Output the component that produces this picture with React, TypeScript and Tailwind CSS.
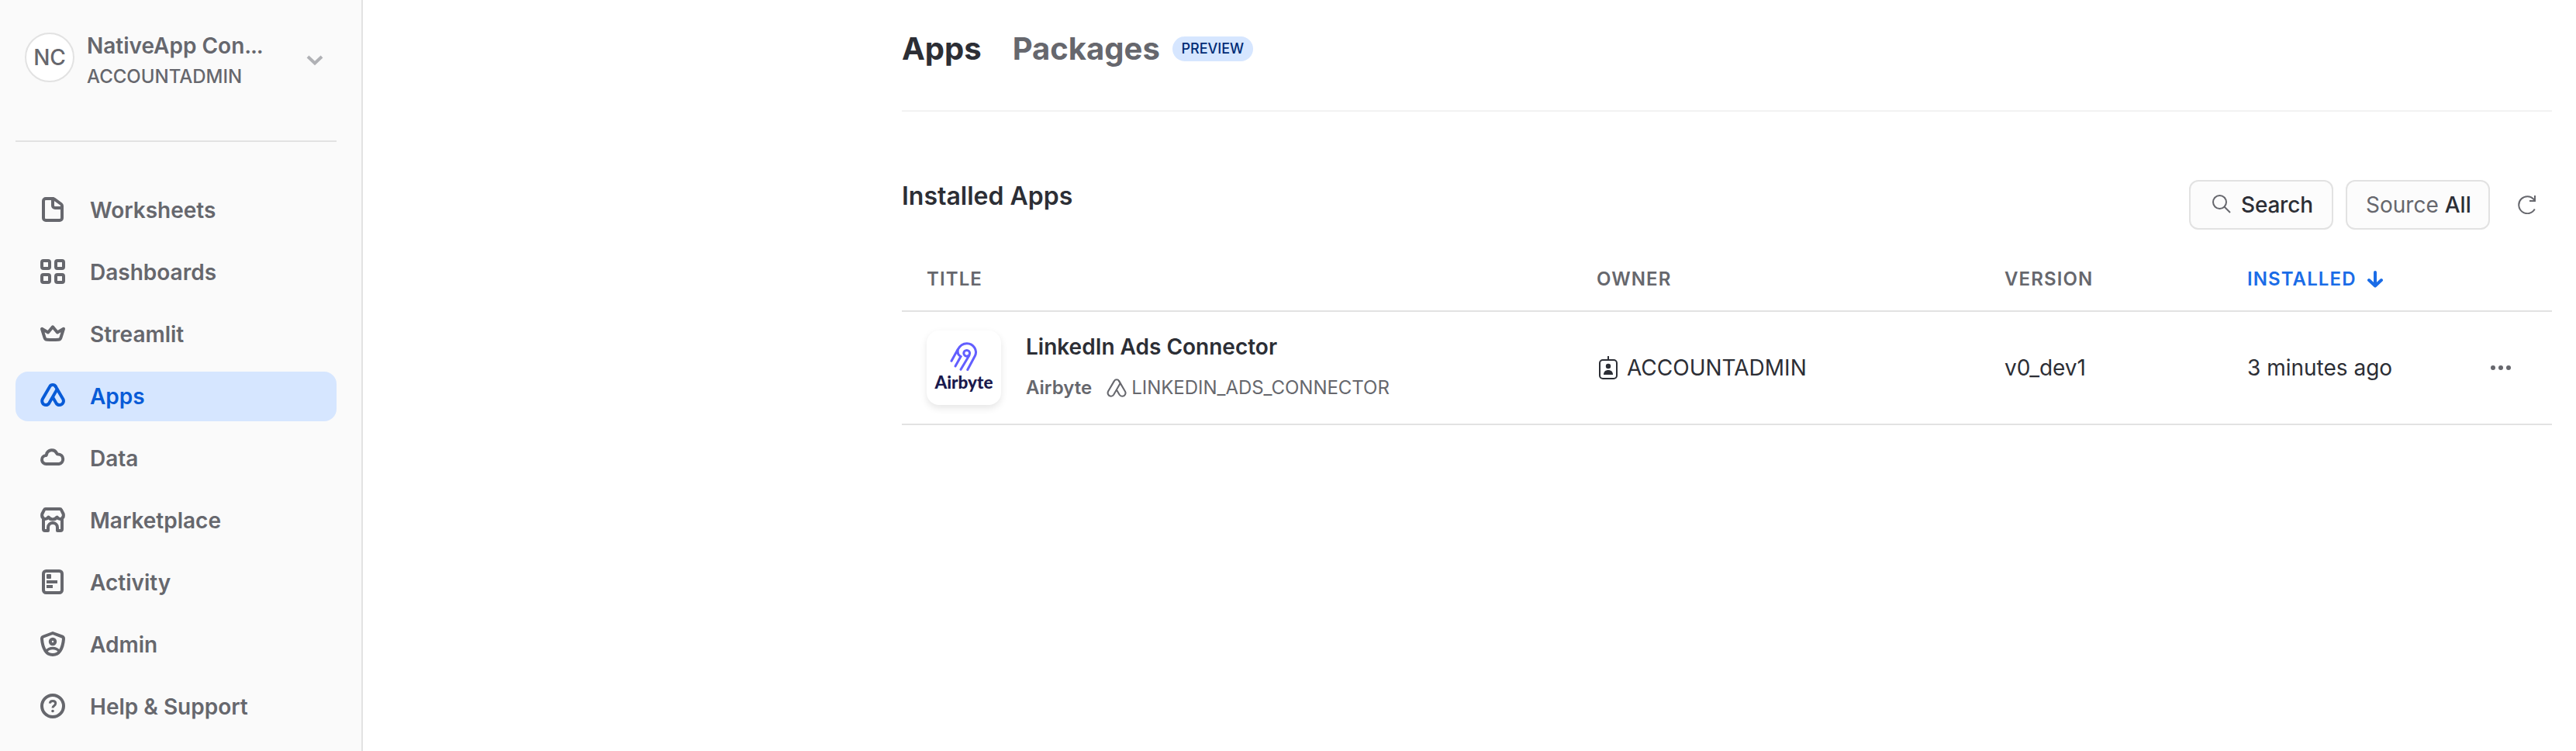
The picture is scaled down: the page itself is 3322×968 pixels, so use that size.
import React from "react";

type IconProps = { children: React.ReactNode };

function NavIcon({ children }: IconProps) {
  return (
    <svg
      className="-mt-0.5 size-8 shrink-0 overflow-visible"
      viewBox="0 0 32 32"
      fill="none"
      stroke="currentColor"
      strokeWidth={4}
      strokeLinecap="round"
      strokeLinejoin="round"
    >
      {children}
    </svg>
  );
}

const appsPath = (
  <>
    <path d="M19.8 4.3C18.2 1.3 13.8 1.3 12.2 4.3L2.9 20.2C1.2 23.4 3 28 7.2 28c1.9 0 3.2-.8 4.2-2.4L21.5 8" />
    <path d="M19.8 4.3l9.4 16C31.2 24 28.6 28 24.6 28c-1.9 0-3.2-.8-4.2-2.4L16.3 18.5" />
  </>
);

const navItems = [
  {
    label: "Worksheets",
    icon: (
      <>
        <path d="M16 2H7a3 3 0 0 0-3 3v22a3 3 0 0 0 3 3h18a3 3 0 0 0 3-3V11.3a3 3 0 0 0-1.2-2.3L18 2.7A3 3 0 0 0 16 2z" />
        <path d="M16 2v9a3 3 0 0 0 3 3h9" />
      </>
    ),
  },
  {
    label: "Dashboards",
    icon: (
      <>
        <rect x="2" y="2" width="10" height="10" rx="2" />
        <rect x="20" y="2" width="10" height="10" rx="2" />
        <rect x="2" y="20" width="10" height="10" rx="2" />
        <rect x="20" y="20" width="10" height="10" rx="2" />
      </>
    ),
  },
  {
    label: "Streamlit",
    icon: <path d="M2 9.8l8 4.7L16 7.3l6 7.2 8-4.7-3.6 11.5a3.500 3.500 0 0 1-3 2.4c-4.8.4-10 .4-14.800 0a3.500 3.500 0 0 1-3-2.400z" />,
  },
  { label: "Apps", icon: appsPath, active: true },
  {
    label: "Data",
    icon: <path d="M7.500 24a5.500 5.500 0 0 1-1-10.900c.9 0 1.300-.2 1.500-1.300a7 7 0 0 1 13.200-1.500c.4.900.9 1.100 2 1.200A6.300 6.300 0 0 1 24 24z" />,
  },
  {
    label: "Marketplace",
    icon: (
      <>
        <path d="M4.500 14.500C2.300 13 1.600 11 2.300 8.500L5 3.200A2 2 0 0 1 6.800 2h18.400A2 2 0 0 1 27 3.200l2.700 5.300c.7 2.500 0 4.500-2.200 6-2.300 1-4.300.3-6-2-1.600 2.300-3.300 3-5.500 3s-3.900-.7-5.500-3c-1.700 2.300-3.700 3-6 2z" />
        <path d="M4 15v13a2 2 0 0 0 2 2h4v-4a6 6 0 0 1 12 0v4h4a2 2 0 0 0 2-2V15" />
      </>
    ),
  },
  {
    label: "Activity",
    icon: (
      <>
        <rect x="4" y="2" width="24" height="28" rx="3.5" />
        <g fill="currentColor" stroke="none">
          <rect x="8" y="6" width="6" height="6" rx="1" />
          <rect x="8" y="14" width="14" height="4" />
          <rect x="8" y="20" width="8" height="4" />
        </g>
      </>
    ),
  },
  {
    label: "Admin",
    icon: (
      <>
        <path d="M16 2L4 6.500a3 3 0 0 0-2 3c.4 6 1.700 11 4.500 15.500C8.800 28.500 12 30 16 30s7.200-1.500 9.500-5c2.800-4.500 4.100-9.500 4.500-15.500a3 3 0 0 0-2-3z" />
        <circle cx="16" cy="13" r="3.2" />
        <path d="M7.500 25.500c2-2.500 5-4 8.500-4s6.500 1.500 8.500 4" strokeWidth={3.6} />
      </>
    ),
  },
  {
    label: "Help & Support",
    icon: (
      <>
        <circle cx="16" cy="16" r="14" />
        <path
          d="M12.300 12.600c.3-2 1.800-3 3.700-3 2.200 0 3.700 1.100 3.700 3 0 1.600-.9 2.300-2 3.100-1.200.8-1.700 1.400-1.700 2.800"
          strokeWidth={3}
          strokeLinecap="butt"
        />
        <circle cx="16" cy="22.5" r="1.8" fill="currentColor" stroke="none" />
      </>
    ),
  },
];

function Sidebar() {
  return (
    <aside className="flex w-[468px] shrink-0 flex-col border-r-2 border-[#e2e2e2] bg-[#fafafa] pr-8 pl-5 text-[#66676d]">
      <div className="flex h-[181px] items-start pr-4 pl-3">
        <div className="mt-[42px] flex size-16 items-center justify-center rounded-full border-2 border-[#e2e2e2] bg-white text-[28px] leading-none font-medium">
          NC
        </div>
        <div className="mt-[41px] ml-4 flex-1">
          <div className="text-[28px] leading-9 font-semibold whitespace-nowrap">
            NativeApp Con<span className="tracking-[-1.2px]">...</span>
          </div>
          <div className="mt-0.5 text-[24px] leading-10 font-medium">ACCOUNTADMIN</div>
        </div>
        <svg className="mt-[68px] h-5 w-6 shrink-0" viewBox="0 0 24 20" fill="none" stroke="#b0b1b5" strokeWidth={4}>
          <path d="M3 5l9 8.500L21 5" />
        </svg>
      </div>
      <div className="h-0.5 bg-[#e2e2e2]" />
      <nav className="mt-14 flex flex-col gap-4">
        {navItems.map((item) => (
          <a
            key={item.label}
            className={
              item.active
                ? "flex h-16 items-center gap-8 rounded-2xl bg-[#d6e6ff] pl-8 text-[#085bd7]"
                : "flex h-16 items-center gap-8 rounded-2xl pl-8"
            }
          >
            <NavIcon>{item.icon}</NavIcon>
            <span className="text-[28px] leading-9 font-semibold whitespace-nowrap">{item.label}</span>
          </a>
        ))}
      </nav>
    </aside>
  );
}

function Toolbar() {
  return (
    <div className="flex h-[182px] items-start justify-between">
      <h2 className="mt-[89px] text-[32px] leading-10 font-semibold text-[#2c2e35]">Installed Apps</h2>
      <div className="mt-[88px] flex items-center gap-4 text-[28px] leading-9">
        <button className="flex h-16 w-[186px] items-center gap-[13px] rounded-xl border-2 border-[#e2e2e2] bg-[#fcfcfc] pl-7 font-medium text-[#2c2e35]">
          <svg className="-mt-0.5 size-6 shrink-0" viewBox="0 0 24 24" fill="none" stroke="#66676d" strokeWidth={2}>
            <circle cx="9.5" cy="9.5" r="8.5" />
            <path d="M15.500 15.500l7.500 7.500" />
          </svg>
          <span className="tracking-[-0.2px]">Search</span>
        </button>
        <button className="flex h-16 w-[186px] items-center gap-2 rounded-xl border-2 border-[#e2e2e2] bg-[#fcfcfc] pl-6 text-[#66676d]">
          <span>Source</span>
          <span className="font-medium text-[#2c2e35]">All</span>
        </button>
        <svg className="mr-5 ml-5 size-6" viewBox="0 0 24 24" fill="none" stroke="#66676d" strokeWidth={2}>
          <path d="M21.800 17.600A11 11 0 1 1 20.800 5.200L22 7" />
          <path d="M22 0v7h-7" />
        </svg>
      </div>
    </div>
  );
}

function AppLogo() {
  return (
    <div className="flex size-24 shrink-0 flex-col items-center rounded-2xl bg-white pt-[15px] shadow-[0_4px_10px_rgba(0,0,0,0.1)]">
      <svg className="h-[38px] w-9 shrink-0" viewBox="0 0 36 38" fill="none" stroke="#625eff" strokeWidth={3} strokeLinecap="round">
        <path d="M2 24.300L10 9.800C13 4.300 17 1.700 22 1.800c8.500.3 14 8.500 10.300 16L22.800 35.500" />
        <path d="M10.300 9.800c-.8 3.600.4 6.800 3.700 8.700L7 31" />
        <path d="M14 35.300L25 17" />
        <circle cx="21.7" cy="14.3" r="3.9" />
      </svg>
      <span className="font-[Lato,sans-serif] text-[22.500px] leading-7 font-black text-[#1a194d]">Airbyte</span>
    </div>
  );
}

function AppsTable() {
  return (
    <div>
      <div className="grid h-[76px] grid-cols-[864px_526px_313px_1fr] items-center border-b-2 border-[#e2e2e2] pb-[7px] pl-8 text-[24px] leading-8 font-semibold tracking-[1.1px] text-[#66676d]">
        <span>TITLE</span>
        <span>OWNER</span>
        <span>VERSION</span>
        <span className="flex items-center gap-[13px] text-[#1a6ce7]">
          INSTALLED
          <svg className="size-[22px]" viewBox="0 0 22 22" fill="none" stroke="currentColor" strokeWidth={4} strokeLinecap="round" strokeLinejoin="round">
            <path d="M11 2v17.500M3 12l8 7.500 8-7.500" />
          </svg>
        </span>
      </div>
      <div className="grid h-[146px] grid-cols-[864px_526px_313px_1fr] items-center border-b-2 border-[#e2e2e2] pl-8 text-[28px] leading-9 text-[#2c2e35]">
        <div className="flex items-center gap-8">
          <AppLogo />
          <div className="mb-[3px]">
            <div className="font-semibold">LinkedIn Ads Connector</div>
            <div className="mt-[19px] flex items-center text-[24px] leading-8 text-[#66676d]">
              <span className="font-semibold">Airbyte</span>
              <svg className="ml-[19px] h-6 w-[26px]" viewBox="0.5 0.5 31 29" fill="none" stroke="currentColor" strokeWidth={2.5} strokeLinecap="round">
                {appsPath}
              </svg>
              <span className="ml-1.5 tracking-[-0.03px]">LINKEDIN_ADS_CONNECTOR</span>
            </div>
          </div>
        </div>
        <div className="flex items-center gap-3 pl-[3px]">
          <svg className="h-[30px] w-6" viewBox="0 0 24 30" fill="none" stroke="currentColor" strokeWidth={2}>
            <path d="M12 0v5" />
            <rect x="1" y="5" width="22" height="24" rx="4" />
            <g fill="currentColor" stroke="none">
              <circle cx="12" cy="13" r="3.2" />
              <path d="M6 24c0-4 2.500-6 6-6s6 2 6 6z" />
            </g>
          </svg>
          <span>ACCOUNTADMIN</span>
        </div>
        <div>v0_dev1</div>
        <div className="flex items-center justify-between pr-[53px]">
          <span>3 minutes ago</span>
          <svg className="h-1.5 w-[26px]" viewBox="0 0 26 6" fill="#66676d">
            <circle cx="3" cy="3" r="3" />
            <circle cx="13" cy="3" r="3" />
            <circle cx="23" cy="3" r="3" />
          </svg>
        </div>
      </div>
    </div>
  );
}

export default function App() {
  return (
    <div className="flex h-[968px] overflow-hidden bg-white font-[Inter,sans-serif] antialiased">
      <Sidebar />
      <main className="flex-1 pr-[31px] pl-[695px]">
        <div className="flex h-36 items-start gap-10 border-b-2 border-[#f2f2f2] pt-[38px] text-[40px] leading-[50px] font-bold">
          <span className="text-[#2c2e35]">Apps</span>
          <span className="flex items-center gap-4 text-[#66676d]">
            Packages
            <span className="flex h-8 w-[104px] items-center justify-center rounded-full bg-[#d6e6ff] text-[18px] leading-none font-medium text-[#002b75]">
              PREVIEW
            </span>
          </span>
        </div>
        <Toolbar />
        <AppsTable />
      </main>
    </div>
  );
}
